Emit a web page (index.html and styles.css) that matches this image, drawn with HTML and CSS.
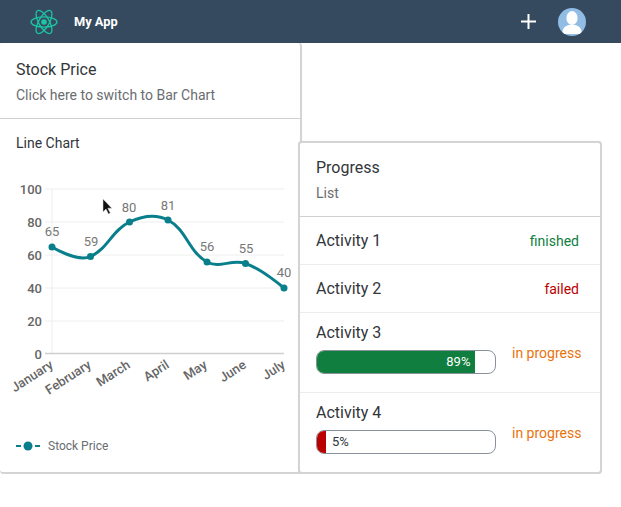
FILE: index.html
```html
<!DOCTYPE html>
<html lang="en">
<head>
  <meta charset="UTF-8" />
  <meta name="viewport" content="width=device-width, initial-scale=1.0"/>
  <title>My App</title>
  <link rel="stylesheet" href="styles.css">
</head>
<body>
  <header class="shell">
    <svg class="logo" width="30" height="30" viewBox="0 0 30 30" fill="none" stroke="#1cc5a3" stroke-width="1.3">
      <circle cx="15" cy="15" r="2.8" fill="#1cc5a3" stroke="none"/>
      <ellipse cx="15" cy="15" rx="13" ry="5.2"/>
      <ellipse cx="15" cy="15" rx="13" ry="5.2" transform="rotate(60 15 15)"/>
      <ellipse cx="15" cy="15" rx="13" ry="5.2" transform="rotate(120 15 15)"/>
    </svg>
    <span class="app-name">My App</span>
    <svg class="plus" width="15" height="15" viewBox="0 0 15 15" stroke="#fff" stroke-width="2">
      <path d="M7.5 0v15M0 7.5h15"/>
    </svg>
    <svg class="avatar" width="28" height="28" viewBox="0 0 28 28">
      <defs><clipPath id="round"><circle cx="14" cy="14" r="14"/></clipPath></defs>
      <circle cx="14" cy="14" r="14" fill="#91bce4"/>
      <g clip-path="url(#round)" fill="#fff">
        <ellipse cx="14" cy="10" rx="5.6" ry="7"/>
        <path d="M4.5 24.5c0-5 3-6.5 6-7.5h7c3 1 6 2.500 6 7.500 0 1-1 1.500-2 1.500H6.500c-1 0-2-.5-2-1.500z"/>
      </g>
    </svg>
  </header>

  <main class="board">
    <section class="card chart-card">
      <div class="card-head">
        <div class="card-title">Stock Price</div>
        <div class="card-sub">Click here to switch to Bar Chart</div>
      </div>
      <div class="chart-title">Line Chart</div>
      <svg class="chart" width="299" height="262" viewBox="0 163 299 262">
        <g stroke="#eeeeee" stroke-width="1">
          <path d="M45 189h239M45 222h239M45 255h239M45 288h239M45 321h239M52 189v164"/>
        </g>
        <path d="M45 353.500h239" stroke="#cfcfcf" stroke-width="1.500"/>
        <g class="y-labels" text-anchor="end">
          <text x="42" y="194">100</text>
          <text x="42" y="227">80</text>
          <text x="42" y="260">60</text>
          <text x="42" y="293">40</text>
          <text x="42" y="326">20</text>
          <text x="42" y="359">0</text>
        </g>
        <g class="x-labels" text-anchor="end">
          <text transform="translate(54 367) rotate(-33)">January</text>
          <text transform="translate(92 367) rotate(-33)">February</text>
          <text transform="translate(131 367) rotate(-33)">March</text>
          <text transform="translate(170 367) rotate(-33)">April</text>
          <text transform="translate(208 367) rotate(-33)">May</text>
          <text transform="translate(247 367) rotate(-33)">June</text>
          <text transform="translate(286 367) rotate(-33)">July</text>
        </g>
        <path d="M52 247C52 247 77.100 262.500 90.500 256.500C108.100 248.700 111.700 230.400 129.500 222C142.700 215.800 155.500 213.600 168 220C186.500 229.600 188.500 251.600 207 262C219.500 269 231.400 258.700 245.500 263.500C262.200 269.100 284 288 284 288" fill="none" stroke="#0a7f8c" stroke-width="3"/>
        <g fill="#0a7f8c">
          <circle cx="52" cy="247" r="3.500"/>
          <circle cx="90.500" cy="256.500" r="3.500"/>
          <circle cx="129.500" cy="222" r="3.500"/>
          <circle cx="168" cy="220" r="3.500"/>
          <circle cx="207" cy="262" r="3.500"/>
          <circle cx="245.500" cy="263.500" r="3.500"/>
          <circle cx="284" cy="288" r="3.500"/>
        </g>
        <g class="values" text-anchor="middle">
          <text x="52" y="236">65</text>
          <text x="91" y="246">59</text>
          <text x="129" y="212">80</text>
          <text x="168" y="210">81</text>
          <text x="207" y="251">56</text>
          <text x="246" y="253">55</text>
          <text x="284" y="277">40</text>
        </g>
        <!-- mouse pointer caught in the shot -->
        <path d="M103 199v13l3-3 2.500 5 1.800-.9-2.500-4.900h4z" fill="#111" stroke="#ddd" stroke-width=".5"/>
      </svg>
      <div class="legend">
        <svg width="24" height="10" viewBox="0 0 24 10">
          <path d="M0 5h5M19 5h5" stroke="#0a7f8c" stroke-width="2"/>
          <circle cx="12" cy="5" r="4.500" fill="#0a7f8c"/>
        </svg>
        <span>Stock Price</span>
      </div>
    </section>

    <section class="card list-card">
      <div class="card-head">
        <div class="card-title">Progress</div>
        <div class="card-sub">List</div>
      </div>
      <div class="row">
        <span class="row-name">Activity 1</span>
        <span class="status good">finished</span>
      </div>
      <div class="row">
        <span class="row-name">Activity 2</span>
        <span class="status bad">failed</span>
      </div>
      <div class="row row-tall">
        <div class="row-main">
          <span class="row-name">Activity 3</span>
          <div class="bar">
            <div class="bar-fill good-fill" style="width: 89%">89%</div>
          </div>
        </div>
        <span class="status busy">in progress</span>
      </div>
      <div class="row row-tall">
        <div class="row-main">
          <span class="row-name">Activity 4</span>
          <div class="bar">
            <div class="bar-fill bad-fill" style="width: 5%"></div>
            <span class="bar-text">5%</span>
          </div>
        </div>
        <span class="status busy">in progress</span>
      </div>
    </section>
  </main>
</body>
</html>
```

FILE: styles.css
```css
* {
  box-sizing: border-box;
}

body {
  margin: 0;
  font-family: Roboto, "Noto Sans", sans-serif;
  background: #fff;
  color: #32363a;
}

.shell {
  height: 43px;
  background: #354a5f;
  display: flex;
  align-items: center;
  padding: 0 35px 0 29px;
}

.logo {
  flex: none;
}

.app-name {
  margin-left: 15px;
  color: #fff;
  font-size: 12.800px;
  font-weight: 700;
  flex: 1;
}

.plus {
  margin-right: 22px;
}

.board {
  display: flex;
  align-items: flex-end;
}

.card {
  background: #fff;
  border: 1px solid #d4d4d4;
  border-width: 0 2px 2px 1px;
  border-radius: 4px;
  box-shadow: 0 0 1px rgba(0, 0, 0, 0.15);
}

.chart-card {
  width: 302px;
  height: 431px;
  border-left: none;
}

.list-card {
  width: 304px;
  height: 333px;
  margin-left: -4px;
  border-width: 2px;
  position: relative;
}

.card-head {
  border-bottom: 1px solid #d0d0d0;
  padding: 13px 16px 0;
  height: 74px;
}

.chart-card .card-head {
  height: 76px;
  padding-top: 15px;
}

.card-title {
  font-size: 16px;
  line-height: 24px;
}

.card-sub {
  margin-top: 3px;
  font-size: 14px;
  line-height: 20px;
  color: #6a6d70;
}

.chart-title {
  padding: 15px 16px 0;
  font-size: 14px;
  line-height: 18px;
  height: 44px;
}

.chart {
  display: block;
}

.chart text {
  font-family: Roboto, "Noto Sans", sans-serif;
}

.y-labels text {
  font-size: 13px;
  font-weight: 500;
  fill: #666;
}

.x-labels text {
  font-size: 13px;
  font-weight: 500;
  fill: #666;
}

.values text {
  font-size: 13px;
  fill: #777;
}

.legend {
  display: flex;
  align-items: center;
  gap: 8px;
  padding: 14px 16px 0;
  font-size: 12px;
  color: #6a6d70;
}

.row {
  display: flex;
  justify-content: space-between;
  align-items: center;
  height: 48px;
  padding: 0 21px 0 16px;
  border-bottom: 1px solid #ececec;
}

.row-tall {
  height: 80px;
  align-items: flex-start;
  padding-top: 9px;
  gap: 16px;
}

.row-tall:last-child {
  border-bottom: none;
}

.row-name {
  font-size: 16px;
  line-height: 22px;
}

.row-main {
  width: 180px;
  flex: none;
}

.status {
  font-size: 14px;
  white-space: nowrap;
}

.row-tall .status {
  line-height: 22px;
  margin-top: 20px;
  margin-left: auto;
}

.good {
  color: #107e3e;
}

.bad {
  color: #bb0000;
}

.busy {
  color: #e9730c;
}

.bar {
  position: relative;
  display: block;
  height: 24px;
  margin-top: 6px;
  border: 1px solid #89919a;
  border-radius: 8px;
  overflow: hidden;
  background: #fff;
}

.bar-fill {
  height: 100%;
  font-size: 13px;
  line-height: 22px;
  color: #fff;
  text-align: right;
  padding-right: 5px;
}

.good-fill {
  background: #107e3e;
}

.bad-fill {
  background: #bb0000;
}

.bar-text {
  position: absolute;
  left: 15px;
  top: 0;
  font-size: 13px;
  line-height: 22px;
  color: #32363a;
}
```
